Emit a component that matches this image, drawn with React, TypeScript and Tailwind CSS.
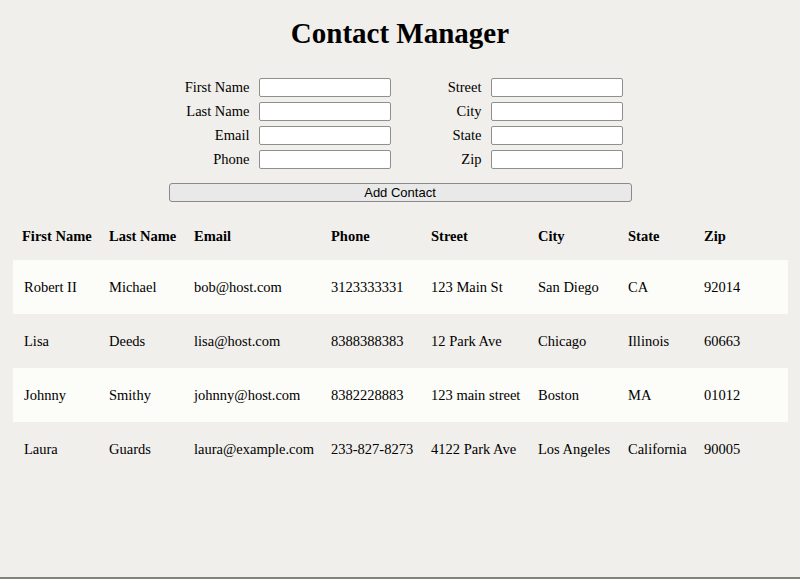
import React from 'react';

const contacts = [
  { first: 'Robert II', last: 'Michael', email: 'bob@host.com', phone: '3123333331', street: '123 Main St', city: 'San Diego', state: 'CA', zip: '92014' },
  { first: 'Lisa', last: 'Deeds', email: 'lisa@host.com', phone: '8388388383', street: '12 Park Ave', city: 'Chicago', state: 'Illinois', zip: '60663' },
  { first: 'Johnny', last: 'Smithy', email: 'johnny@host.com', phone: '8382228883', street: '123 main street', city: 'Boston', state: 'MA', zip: '01012' },
  { first: 'Laura', last: 'Guards', email: 'laura@example.com', phone: '233-827-8273', street: '4122 Park Ave', city: 'Los Angeles', state: 'California', zip: '90005' },
];

const headers = ['First Name', 'Last Name', 'Email', 'Phone', 'Street', 'City', 'State', 'Zip'];

const cols = 'grid grid-cols-[85px_85px_137px_100px_107px_90px_76px_95px]';

const Field: React.FC<{ label: string; labelWidth: string }> = ({ label, labelWidth }) => (
  <div className="flex items-center h-[19px] gap-[9px]">
    <label className={`${labelWidth} text-right leading-[19px]`}>{label}</label>
    <input
      type="text"
      className="w-[132px] h-[19px] bg-white border border-[#8f8f8f] rounded-[2px] outline-none"
    />
  </div>
);

const App: React.FC = () => {
  return (
    <div className="h-[579px] flex flex-col bg-[#f0efeb] text-black font-['Liberation_Serif',serif] text-[14.5px]">
      <div className="flex-1">
        <h1 className="pt-[14px] text-center text-[29px] leading-[38px] font-bold">Contact Manager</h1>

        <div className="w-[481px] mx-auto mt-[26px]">
          <div className="flex gap-[10px]">
            <div className="flex flex-col gap-[5px]">
              <Field label="First Name" labelWidth="w-[90px]" />
              <Field label="Last Name" labelWidth="w-[90px]" />
              <Field label="Email" labelWidth="w-[90px]" />
              <Field label="Phone" labelWidth="w-[90px]" />
            </div>
            <div className="flex flex-col gap-[5px]">
              <Field label="Street" labelWidth="w-[81px]" />
              <Field label="City" labelWidth="w-[81px]" />
              <Field label="State" labelWidth="w-[81px]" />
              <Field label="Zip" labelWidth="w-[81px]" />
            </div>
          </div>
          <button className="block ml-[9px] mt-[14px] w-[463px] h-[19px] bg-[#e9e9e9] border border-[#8a8a8a] rounded-[3px] font-['Liberation_Sans',sans-serif] text-[13px] leading-none">
            Add Contact
          </button>
        </div>

        <div className="mx-[13px] mt-[10px] w-[775px]">
          <div className={`${cols} h-[48px] items-center pt-[2px] font-bold`}>
            {headers.map((h, i) => (
              <div key={h} className={i === 0 ? 'pl-[9px] whitespace-nowrap' : 'pl-[11px] whitespace-nowrap'}>{h}</div>
            ))}
          </div>
          {contacts.map((c, index) => (
            <div
              key={index}
              className={`${cols} h-[54px] items-center pt-[2px] ${index % 2 === 0 ? 'bg-[#fcfcf8]' : ''}`}
            >
              {[c.first, c.last, c.email, c.phone, c.street, c.city, c.state, c.zip].map((v, i) => (
                <div key={i} className="pl-[11px] whitespace-nowrap">{v}</div>
              ))}
            </div>
          ))}
        </div>
      </div>
      <div className="h-[2px] bg-[#7f847b]"></div>
    </div>
  );
};

export default App;
